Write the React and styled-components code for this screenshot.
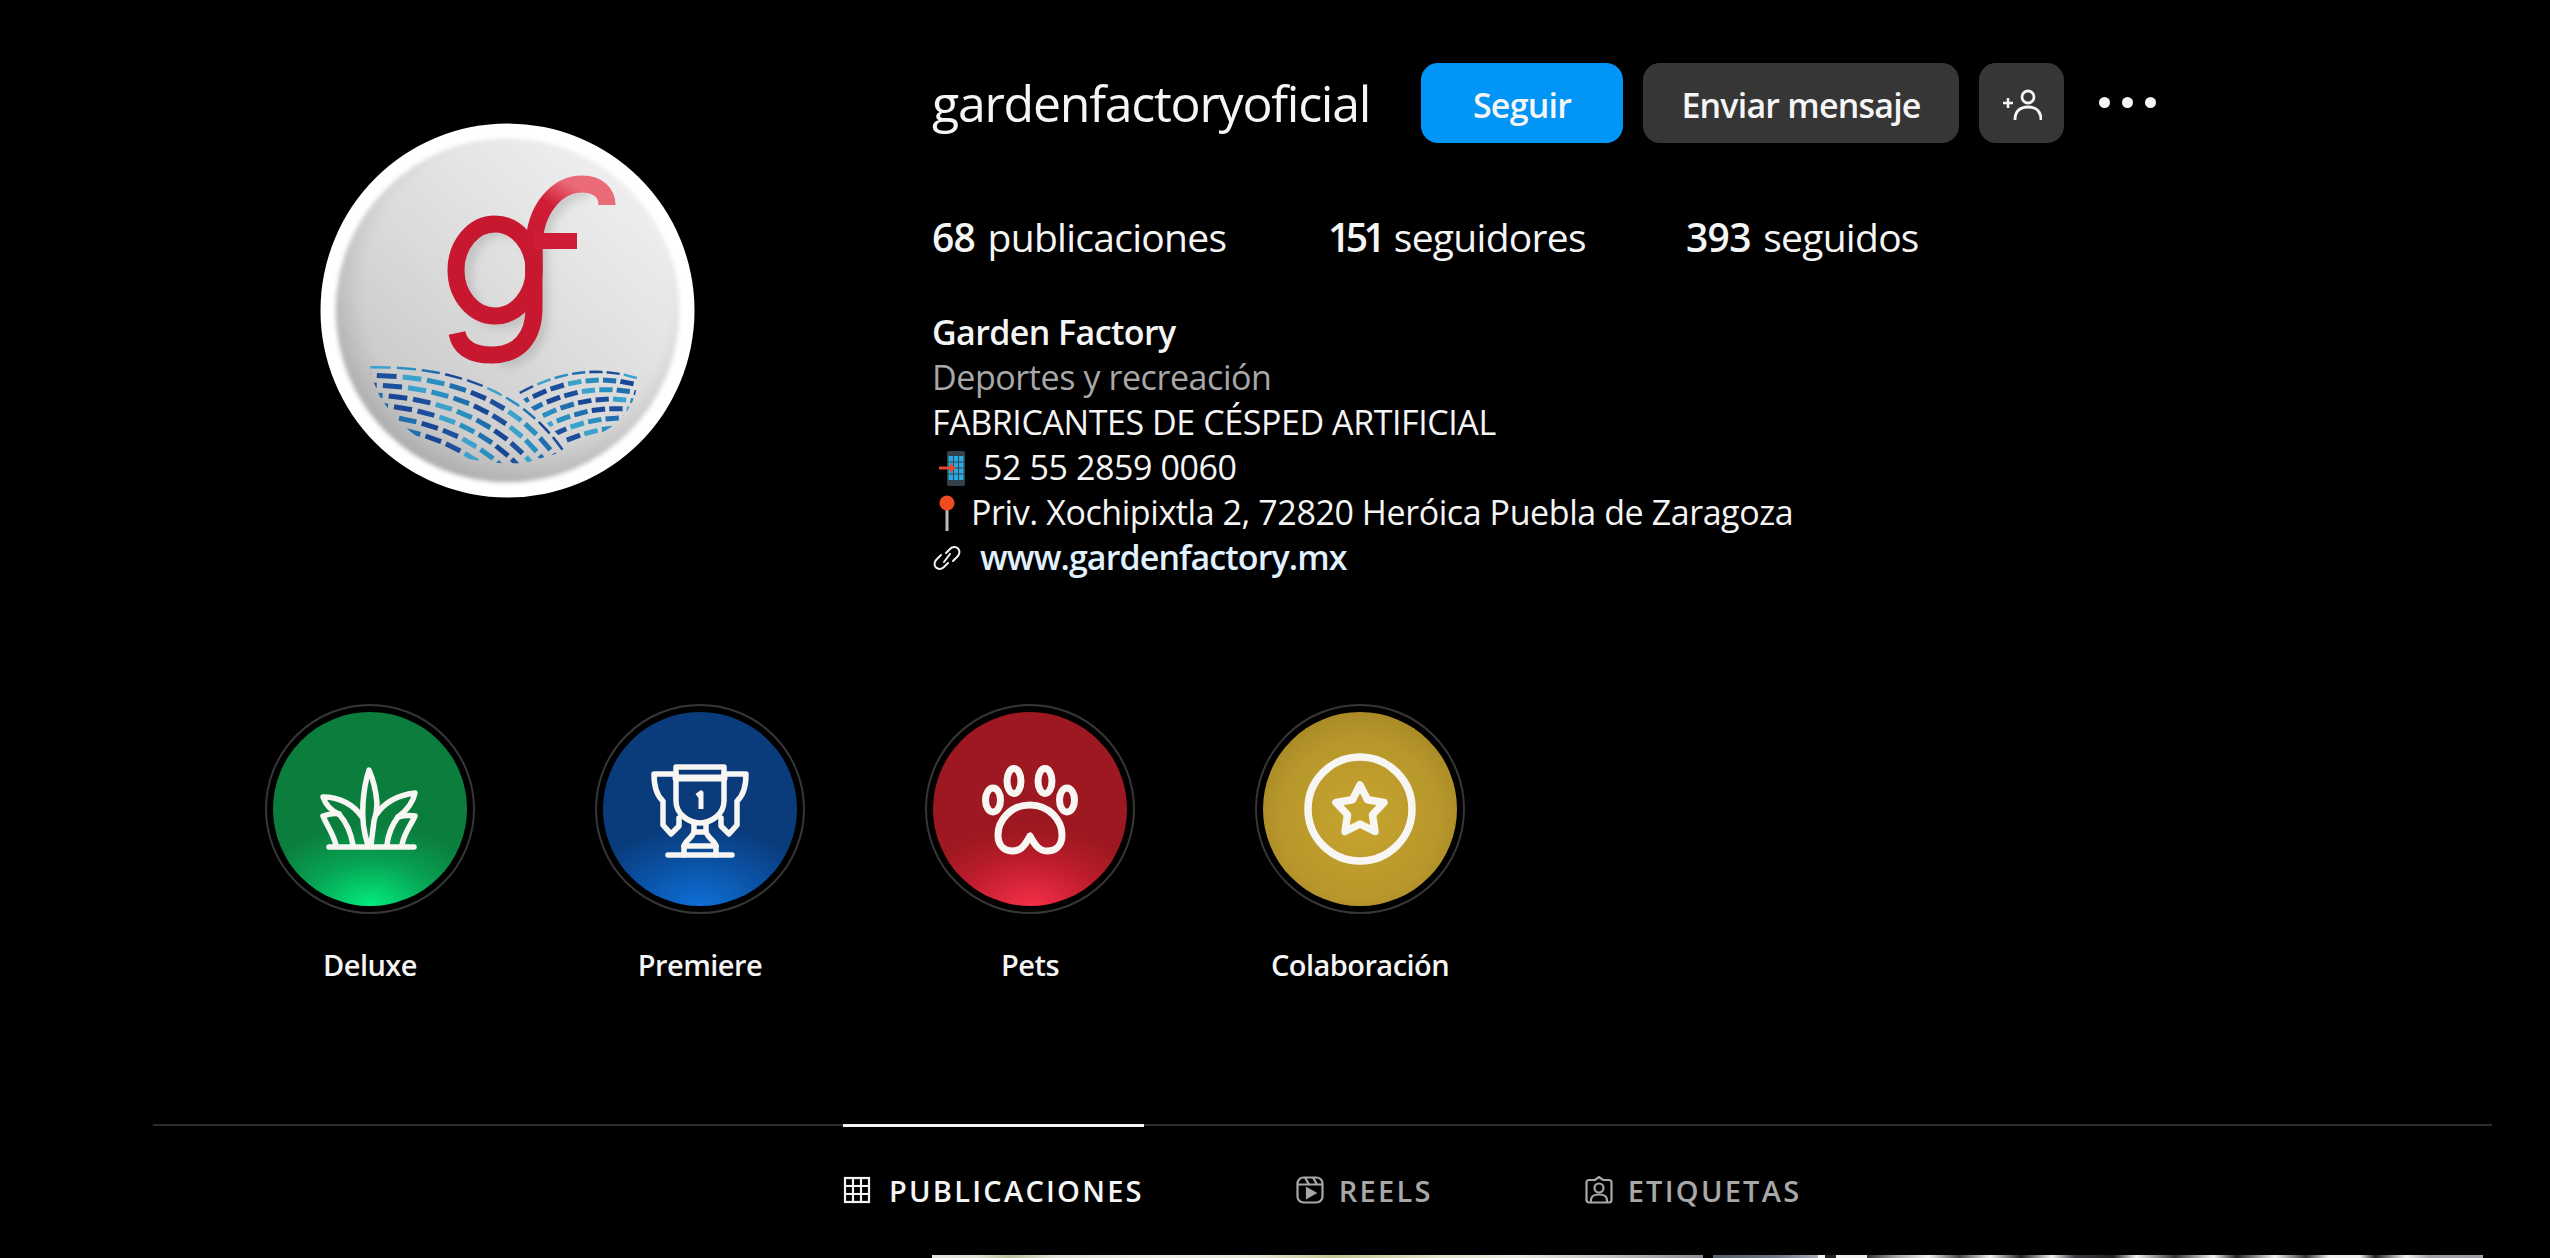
import React from "react";
import styled, { createGlobalStyle } from "styled-components";

const GlobalStyle = createGlobalStyle`
  html, body {
    margin: 0;
    background: #000;
    color: #f5f5f5;
    font-family: "Open Sans", "Noto Sans", sans-serif;
  }
  * { box-sizing: border-box; }
`;

const Page = styled.div`
  width: 2550px;
  height: 1258px;
  overflow: hidden;
  background: #000;
  padding-left: 153px;
  padding-right: 58px;
`;

const Header = styled.header`
  display: flex;
  align-items: flex-start;
  padding: 63px 0 0 167px;
  height: 704px;
`;

const Avatar = styled.svg`
  width: 375px;
  height: 375px;
  flex: none;
  margin-top: 60px;
  margin-right: 237px;
`;

const Info = styled.section`
  display: flex;
  flex-direction: column;
`;

const TopRow = styled.div`
  display: flex;
  align-items: center;
  height: 80px;
`;

const Username = styled.h2`
  margin: 0 50px 0 0;
  width: 439px;
  font-size: 50px;
  font-weight: 400;
  letter-spacing: -1.25px;
  white-space: nowrap;
`;

const Action = styled.button`
  height: 80px;
  width: ${(p) => p.$w}px;
  margin-right: 20px;
  border: 0;
  border-radius: 17px;
  background: ${(p) => (p.$primary ? "#0095f6" : "#363636")};
  color: #f5f5f5;
  font-family: inherit;
  font-size: 34px;
  font-weight: 600;
  letter-spacing: -0.8px;
  display: flex;
  align-items: center;
  justify-content: center;
  padding: 3px 0 0;
`;

const More = styled.div`
  margin-left: 15px;
  display: flex;
  gap: 12px;
  margin-top: -2px;
`;

const Dot = styled.span`
  width: 11px;
  height: 11px;
  border-radius: 50%;
  background: #f5f5f5;
`;

const Stats = styled.ul`
  display: flex;
  list-style: none;
  margin: 68px 0 0;
  padding: 0;
  height: 50px;
  align-items: center;
  font-size: 39px;
  letter-spacing: -0.72px;
  word-spacing: 3px;
  white-space: nowrap;
`;

const Stat = styled.li`
  width: ${(p) => p.$w}px;
`;

const Count = styled.b`
  font-weight: 600;
  letter-spacing: ${(p) => (p.$tight ? "-4.5px" : "inherit")};
`;

const Bio = styled.div`
  margin-top: 49px;
  font-size: 34px;
  line-height: 45px;
  letter-spacing: -0.42px;
  white-space: nowrap;
`;

const BioLine = styled.div`
  display: flex;
  align-items: center;
  height: 45px;
  font-weight: ${(p) => (p.$bold ? 600 : 400)};
  letter-spacing: ${(p) => (p.$bold ? "-0.6px" : "inherit")};
  color: ${(p) => (p.$muted ? "#a8a8a8" : "#f5f5f5")};
`;

const LineIcon = styled.svg`
  flex: none;
  width: ${(p) => p.$w}px;
  height: 40px;
  margin-right: ${(p) => p.$gap}px;
`;

const SiteLink = styled.a`
  color: #e0f1ff;
  font-weight: 600;
  letter-spacing: -0.9px;
`;

const Highlights = styled.div`
  display: flex;
  padding-left: 52px;
`;

const Highlight = styled.div`
  width: 330px;
  display: flex;
  flex-direction: column;
  align-items: center;
`;

const Ring = styled.div`
  width: 210px;
  height: 210px;
  border-radius: 50%;
  border: 2px solid #363636;
  padding: 6px;
`;

const Disc = styled.div`
  width: 100%;
  height: 100%;
  border-radius: 50%;
  background: ${(p) => p.$bg};
  display: flex;
  align-items: center;
  justify-content: center;
`;

const HighlightIcon = styled.svg`
  width: 130px;
  height: 130px;
  fill: none;
  stroke: #f8f6f2;
  stroke-width: ${(p) => p.$stroke || 5.5};
  stroke-linecap: round;
  stroke-linejoin: round;
`;

const HighlightName = styled.div`
  margin-top: 30px;
  font-size: 29px;
  line-height: 42px;
  font-weight: 600;
  letter-spacing: -0.55px;
`;

const TabBar = styled.nav`
  display: flex;
  gap: 152px;
  height: 131px;
  margin-top: 138px;
  padding-left: 690px;
  border-top: 2px solid #2b2b2b;
`;

const Tab = styled.div`
  height: 65px;
  margin-top: -2px;
  border-top: 3px solid ${(p) => (p.$active ? "#f5f5f5" : "transparent")};
  display: flex;
  align-items: flex-start;
  gap: ${(p) => p.$gap}px;
  padding-top: 49px;
  color: ${(p) => (p.$active ? "#f5f5f5" : "#a8a8a8")};
  font-size: 29px;
  line-height: 30px;
  font-weight: 600;
  letter-spacing: 2.25px;
`;

const TabIcon = styled.svg`
  flex: none;
  width: 28px;
  height: 28px;
  fill: none;
  stroke: currentColor;
  stroke-width: 2.2;
`;

const Posts = styled.div`
  display: grid;
  grid-template-columns: 771px 770px;
  gap: 10px;
  margin-left: 779px;
  height: 3px;
`;

const Post = styled.div`
  background: ${(p) => p.$bg};
`;

// blue tiles under the "gf" mark: rows are copies of the dome's top edge, clipped to the dome
const quad = (a, c, b, t) => [
  (1 - t) * (1 - t) * a[0] + 2 * (1 - t) * t * c[0] + t * t * b[0],
  (1 - t) * (1 - t) * a[1] + 2 * (1 - t) * t * c[1] + t * t * b[1],
];

const tileColors = ["#1c4f9c", "#2a8fc0", "#174795", "#3ba2cc", "#1f6fae"];

const buildTiles = ([a, c, b], [dx, dy], rows, cols, seed) => {
  const tiles = [];
  for (let r = 0; r < rows; r++) {
    const shift = (r % 2) * 0.5;
    for (let i = -1; i < cols + 2; i++) {
      const p = quad(a, c, b, (i + shift + 0.12) / cols);
      const q = quad(a, c, b, (i + shift + 0.88) / cols);
      tiles.push({
        key: `${seed}-${r}-${i}`,
        d: `M${(p[0] + dx * r).toFixed(1)} ${(p[1] + dy * r).toFixed(1)}L${(q[0] + dx * r).toFixed(1)} ${(q[1] + dy * r).toFixed(1)}`,
        color: tileColors[(r * 2 + (i + 1) * 3 + seed) % tileColors.length],
      });
    }
  }
  return tiles;
};

const leftTiles = buildTiles([[47, 243], [185, 240], [245, 328]], [-7, 9.5], 12, 10, 0);
const rightTiles = buildTiles([[197, 270], [250, 240], [302, 250]], [5, 9.5], 9, 6, 2);

const LogoAvatar = () => (
  <Avatar viewBox="0 0 375 375">
    <defs>
      <linearGradient id="face" x1="0.85" y1="0.1" x2="0.15" y2="0.9">
        <stop offset="0" stopColor="#efefef" />
        <stop offset="0.5" stopColor="#dcdcdc" />
        <stop offset="1" stopColor="#c4c4c4" />
      </linearGradient>
      <radialGradient id="shade" cx="0.53" cy="0.45" r="0.55">
        <stop offset="0.82" stopColor="#777" stopOpacity="0" />
        <stop offset="1" stopColor="#666" stopOpacity="0.25" />
      </radialGradient>
      <linearGradient id="red" x1="0" y1="1" x2="0.5" y2="0">
        <stop offset="0" stopColor="#c4182e" />
        <stop offset="0.7" stopColor="#cf1d35" />
        <stop offset="1" stopColor="#ea6a7a" />
      </linearGradient>
      <filter id="soft">
        <feGaussianBlur stdDeviation="5" />
      </filter>
      <filter id="edge">
        <feGaussianBlur stdDeviation="2" />
      </filter>
      <clipPath id="domeLeft">
        <path d="M47 243Q185 240 245 328L205 340Q105 345 60 274Z" />
      </clipPath>
      <clipPath id="domeRight">
        <path d="M197 270Q250 240 302 250L318 254Q316 306 248 322Z" />
      </clipPath>
    </defs>
    <circle cx="187.5" cy="187.5" r="187" fill="#fff" />
    <circle cx="187.5" cy="187.5" r="172" fill="url(#face)" filter="url(#edge)" />
    <circle cx="187.5" cy="187.5" r="171" fill="url(#shade)" filter="url(#edge)" />
    <g fill="none" stroke="#8a8a8a" strokeWidth="12" opacity="0.35" filter="url(#soft)" transform="translate(8 6)">
      <ellipse cx="175" cy="147" rx="38" ry="46" />
      <path d="M214 140V185C214 215 198 232 172 232" />
      <path d="M214 170V120C214 85 240 61 262 61" />
    </g>
    <g fill="none" stroke="url(#red)" strokeWidth="17">
      <ellipse cx="175" cy="147" rx="39" ry="46" stroke="#c8182f" />
      <path d="M214 120V185C214 215 198 232 172 232C152 232 140 225 137 210" stroke="#c8182f" />
      <path d="M214 150V125C214 85 238 61 262 61C278 61 287 70 287 82" />
      <path d="M214 118H257" stroke="#cf1d35" strokeWidth="16" />
    </g>
    <g fill="none" strokeWidth="5" clipPath="url(#domeRight)">
      {rightTiles.map((t) => (
        <path key={t.key} d={t.d} stroke={t.color} />
      ))}
    </g>
    <g fill="none" strokeWidth="5" clipPath="url(#domeLeft)">
      {leftTiles.map((t) => (
        <path key={t.key} d={t.d} stroke={t.color} />
      ))}
    </g>
  </Avatar>
);

const GrassIcon = () => (
  <HighlightIcon viewBox="-65 -65 130 130">
    <path d="M-41 38H44" />
    <path d="M-2 36C-7 22-8 8-7-6C-6-20-4-30-1-39C3-30 6-18 7-6C7 0 6 6 4 12C3 20 2 28 1 36" />
    <path d="M-8 8C-16-4-30-12-47-12C-44-3-38 2-31 5C-23 14-19 24-17 36" />
    <path d="M6 6C14-6 28-14 45-16C43-6 36 2 28 8C22 16 18 26 17 36" />
    <path d="M-31 5C-35 4-41 5-47 7C-43 17-37 24-34 36" />
    <path d="M28 8C32 7 38 6 45 7C40 18 34 24 32 36" />
  </HighlightIcon>
);

const TrophyIcon = () => (
  <HighlightIcon viewBox="-65 -65 130 130">
    <path d="M-24-42H24V-8C24 6 10 14 0 14C-10 14-24 6-24-8Z" />
    <path d="M-24-31H24" strokeWidth="7" />
    <path d="M-24-35H-46C-46-24-44-14-37-8V16L-29 25L-21 17V9" />
    <path d="M24-35H46C46-24 44-14 37-8V16L29 25L21 17V9" />
    <path d="M-6 14V22C-6 28-14 30-16 37V46" />
    <path d="M6 14V22C6 28 14 30 16 37V46" />
    <path d="M-6 23H6M-16 37H16M-32 46H32" />
    <path d="M-3-13L1-16V0" strokeWidth="5" strokeLinecap="butt" />
  </HighlightIcon>
);

const PawIcon = () => (
  <HighlightIcon viewBox="-65 -65 130 130" $stroke={7}>
    <ellipse cx="-37" cy="-9" rx="7.5" ry="12" />
    <ellipse cx="-16" cy="-28" rx="7" ry="12.5" />
    <ellipse cx="15" cy="-28" rx="7" ry="12.5" />
    <ellipse cx="37" cy="-9" rx="7.5" ry="12" />
    <path d="M0-4C20-4 32 12 32 26C32 38 24 42 17 42C8 42 4 34 0 27C-4 34-8 42-17 42C-24 42-32 38-32 26C-32 12-20-4 0-4Z" />
  </HighlightIcon>
);

const StarIcon = () => (
  <HighlightIcon viewBox="-65 -65 130 130" $stroke={7.5}>
    <circle cx="0" cy="0" r="52" />
    <path d="M0-24L7.5-9.3L24-6.5L12.5 5.8L15 22.5L0 15L-15 22.5L-12.5 5.8L-24-6.5L-7.5-9.3Z" />
  </HighlightIcon>
);

const stories = [
  { name: "Deluxe", Icon: GrassIcon, bg: "radial-gradient(ellipse 62% 42% at 50% 100%, #04ec80 0%, #07a253 55%, #0b7e3d 100%), #0b7e3d" },
  { name: "Premiere", Icon: TrophyIcon, bg: "radial-gradient(ellipse 62% 42% at 50% 100%, #0f6fd6 0%, #0a4fa0 60%, #0a3b7a 100%), #0a3b7a" },
  { name: "Pets", Icon: PawIcon, bg: "radial-gradient(ellipse 62% 40% at 50% 100%, #f52f48 0%, #bc1c2c 60%, #9d1820 100%), #9d1820" },
  { name: "Colaboración", Icon: StarIcon, bg: "radial-gradient(circle at 50% 55%, #c6a52f 0%, #b8972b 55%, #957a22 100%)" },
];

const App = () => (
  <>
    <GlobalStyle />
    <Page>
      <Header>
        <LogoAvatar />
        <Info>
          <TopRow>
            <Username>gardenfactoryoficial</Username>
            <Action $primary $w={202}>Seguir</Action>
            <Action $w={316}>Enviar mensaje</Action>
            <Action $w={85}>
              <svg width="40" height="32" viewBox="0 0 40 32" fill="none" stroke="#f5f5f5" strokeWidth="2.8">
                <circle cx="26" cy="8" r="6" />
                <path d="M13 31C13 22 18 18 26 18C34 18 39 22 39 31" />
                <path d="M1 14H11M6 9V19" strokeWidth="2.6" />
              </svg>
            </Action>
            <More>
              <Dot />
              <Dot />
              <Dot />
            </More>
          </TopRow>
          <Stats>
            <Stat $w={396}><Count>68</Count> publicaciones</Stat>
            <Stat $w={358}><Count $tight>151</Count> seguidores</Stat>
            <Stat $w={240}><Count>393</Count> seguidos</Stat>
          </Stats>
          <Bio>
            <BioLine $bold>Garden Factory</BioLine>
            <BioLine $muted>Deportes y recreación</BioLine>
            <BioLine>FABRICANTES DE CÉSPED ARTIFICIAL</BioLine>
            <BioLine>
              <LineIcon $w={36} $gap={15} viewBox="0 0 36 40">
                <rect x="15" y="3" width="18" height="35" rx="2" fill="#33414d" />
                <rect x="16.5" y="8" width="15" height="24" fill="#29a9e0" />
                <path d="M21.5 8V32M26.5 8V32M16.5 14H31.5M16.5 20H31.5M16.5 26H31.5" stroke="#33414d" strokeWidth="1" />
                <path d="M7 20H20" stroke="#e2492f" strokeWidth="3" />
                <path d="M18 15L24 20L18 25Z" fill="#e2492f" />
              </LineIcon>
              52 55 2859 0060
            </BioLine>
            <BioLine>
              <LineIcon $w={24} $gap={15} viewBox="0 0 24 40">
                <rect x="13.5" y="12" width="3" height="26" fill="#b9bcbf" />
                <circle cx="15" cy="10" r="7.5" fill="#f04a23" />
              </LineIcon>
              Priv. Xochipixtla 2, 72820 Heróica Puebla de Zaragoza
            </BioLine>
            <BioLine>
              <LineIcon $w={30} $gap={18} viewBox="0 0 30 40" fill="none" stroke="#f0f0f0" strokeWidth="2" strokeLinecap="round">
                <path d="M14 15L18 11C20.5 8.5 24 8.5 26 10.5C28 12.5 28 16 25.5 18.5L21 23" />
                <path d="M16 25L12 29C9.5 31.5 6 31.5 4 29.5C2 27.5 2 24 4.5 21.5L9 17" />
                <path d="M12 24L18 16" />
              </LineIcon>
              <SiteLink>www.gardenfactory.mx</SiteLink>
            </BioLine>
          </Bio>
        </Info>
      </Header>
      <Highlights>
        {stories.map(({ name, Icon, bg }) => (
          <Highlight key={name}>
            <Ring>
              <Disc $bg={bg}>
                <Icon />
              </Disc>
            </Ring>
            <HighlightName>{name}</HighlightName>
          </Highlight>
        ))}
      </Highlights>
      <TabBar>
        <Tab $active $gap={18}>
          <TabIcon viewBox="0 0 28 28">
            <rect x="2" y="2" width="24" height="24" />
            <path d="M10 2V26M18 2V26M2 10H26M2 18H26" />
          </TabIcon>
          PUBLICACIONES
        </Tab>
        <Tab $gap={15}>
          <TabIcon viewBox="0 0 28 28">
            <rect x="1.5" y="1.5" width="25" height="25" rx="6" />
            <path d="M1.5 8.5H26.5M9 1.5L13 8.5M17 1.5L21 8.5" />
            <path d="M11 12.5L19 17L11 21.5Z" fill="currentColor" />
          </TabIcon>
          REELS
        </Tab>
        <Tab $gap={15}>
          <TabIcon viewBox="0 0 28 28">
            <path d="M4 4H10L14 1L18 4H24C25.5 4 26.5 5 26.5 6.5V24C26.5 25.5 25.5 26.5 24 26.5H4C2.5 26.5 1.5 25.5 1.5 24V6.5C1.5 5 2.5 4 4 4Z" />
            <circle cx="14" cy="12" r="4.5" />
            <path d="M6 26V24C6 20 9 18.5 14 18.5C19 18.5 22 20 22 24V26" />
          </TabIcon>
          ETIQUETAS
        </Tab>
      </TabBar>
      <Posts>
        <Post $bg="linear-gradient(90deg, #e6e6e2 0%, #dfe0d2 6%, #b9bf9a 10%, #e2e3d8 16%, #eceee6 30%, #e6e6d8 42%, #c4c690 52%, #d0d2a8 58%, #e2e4cc 66%, #eaeae2 76%, #c0c0c0 88%, #8a8a90 100%)" />
        <Post $bg="linear-gradient(90deg, #55606a 0%, #6b7480 8%, #a9a9b8 13.7%, #f4f4f4 13.7%, #f4f4f4 14.5%, #222 14.5%, #222 16%, #f0f0f0 16%, #f0f0f0 20%, #333 20%, #a8a8a8 24%, #f0f0f0 28%, #444 32%, #eee 36%, #222 40%, #eee 44%, #3a3a44 47%, #222 52%, #f0f0f0 55%, #333 60%, #f0f0f0 65%, #222 68%, #f0f0f0 73%, #333 77%, #eee 80%, #eee 84%, #222 86%, #f0f0f0 90%, #a0a0a8 93%, #9d9da6 100%)" />
      </Posts>
    </Page>
  </>
);

export default App;
